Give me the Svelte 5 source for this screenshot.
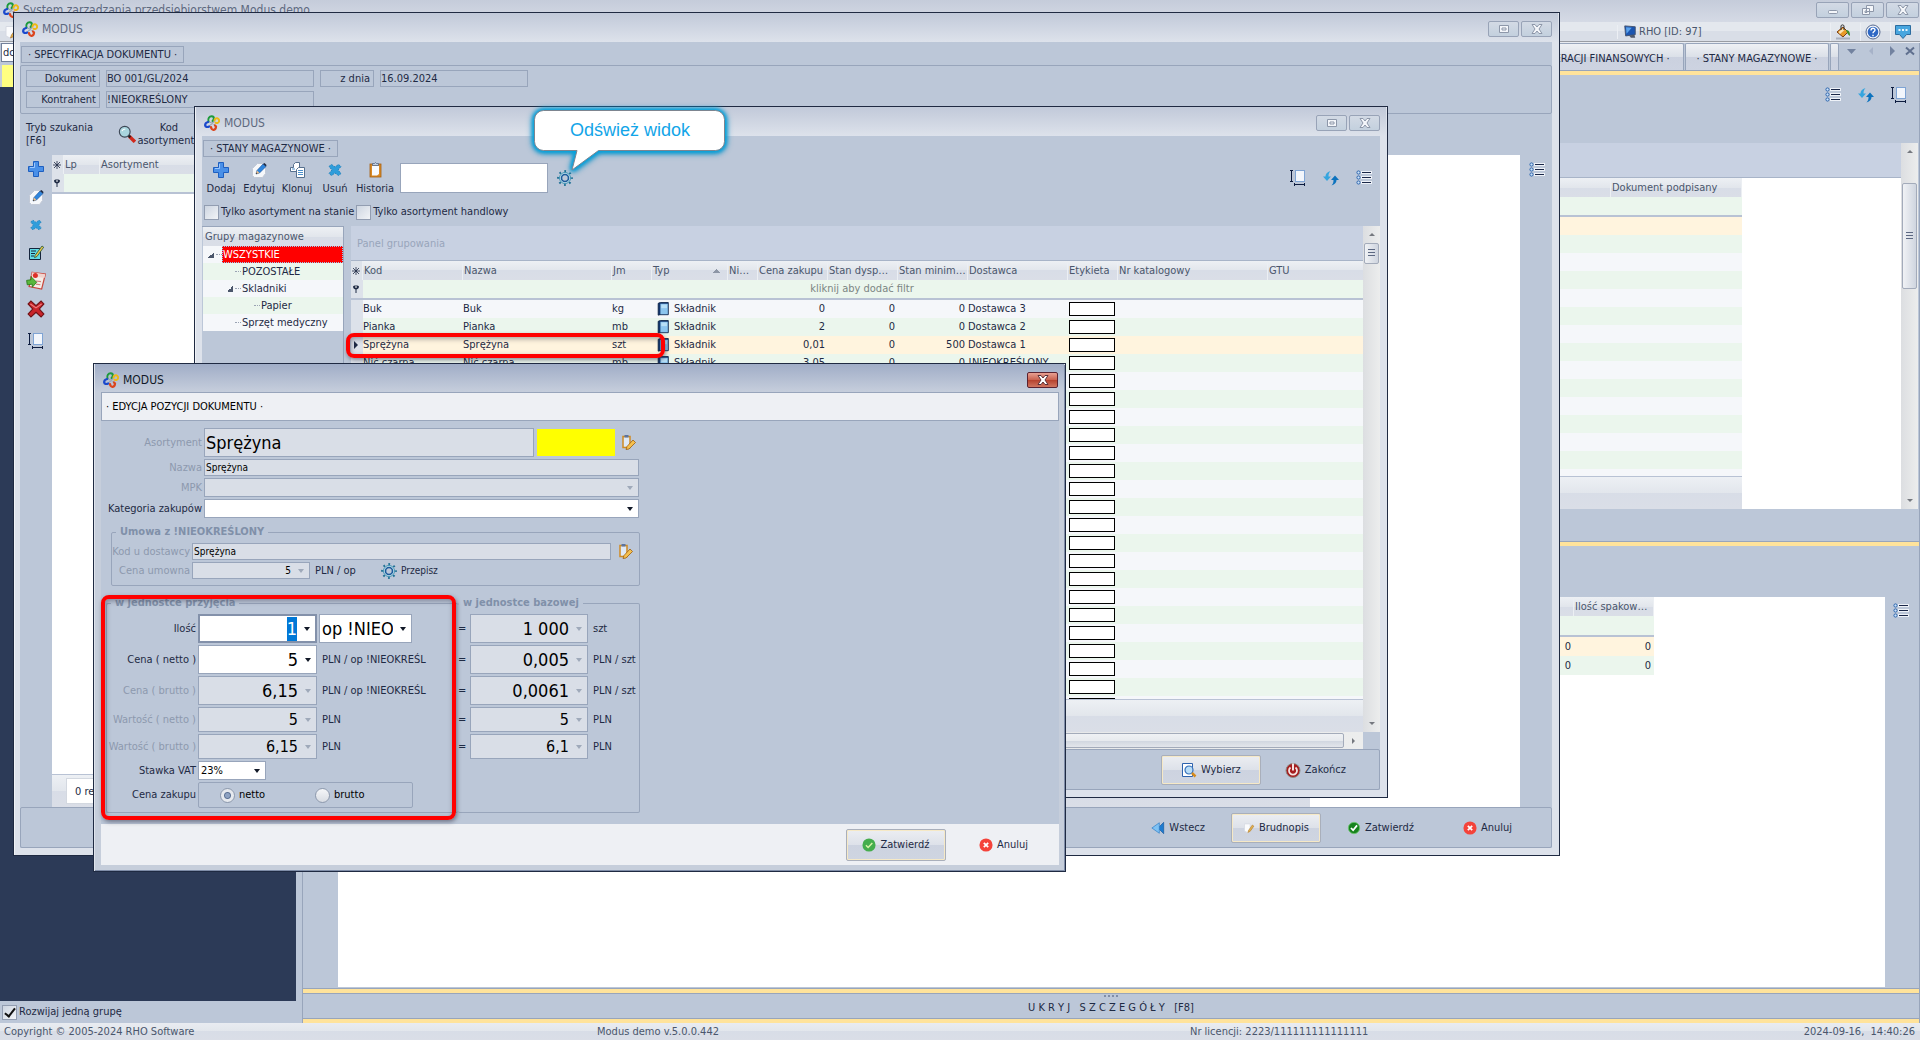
<script lang="ts">
  type Column = { label: string; width: number; sorted?: boolean };

  const columns: Column[] = [
    { label: "Kod", width: 100 },
    { label: "Nazwa", width: 149 },
    { label: "Jm", width: 40 },
    { label: "Typ", width: 76, sorted: true },
    { label: "Ni…", width: 30 },
    { label: "Cena zakupu", width: 70 },
    { label: "Stan dysp…", width: 70 },
    { label: "Stan minim…", width: 70 },
    { label: "Dostawca", width: 100 },
    { label: "Etykieta", width: 50 },
    { label: "Nr katalogowy", width: 150 },
    { label: "GTU", width: 96 },
  ];

  const items = [
    { code: "Buk", unit: "kg", price: "0", available: "0", minimum: "0", supplier: "Dostawca 3" },
    { code: "Pianka", unit: "mb", price: "2", available: "0", minimum: "0", supplier: "Dostawca 2" },
    { code: "Sprężyna", unit: "szt", price: "0,01", available: "0", minimum: "500", supplier: "Dostawca 1" },
    { code: "Nić czarna", unit: "mb", price: "3,05", available: "0", minimum: "0", supplier: "!NIEOKREŚLONY" },
  ];
  const blankRows = Array.from({ length: 19 }, (_, i) => i);
  const signedRows = Array.from({ length: 15 }, (_, i) => i);

  const groups = [
    { label: "WSZYSTKIE", level: 0, open: true },
    { label: "POZOSTAŁE", level: 1, open: false },
    { label: "Skladniki", level: 1, open: true },
    { label: "Papier", level: 2, open: false },
    { label: "Sprzęt medyczny", level: 1, open: false },
  ];

  const stockTools = [
    { icon: "plus", label: "Dodaj" },
    { icon: "pencil", label: "Edytuj" },
    { icon: "copy", label: "Klonuj" },
    { icon: "cross", label: "Usuń" },
    { icon: "clipboard", label: "Historia" },
  ];

  const sideTools = [
    { icon: "plus", label: "Dodaj", size: 16 },
    { icon: "pencil", label: "Edytuj", size: 16 },
    { icon: "cross", label: "Usuń", size: 14 },
    { icon: "note", label: "Notatka", size: 16 },
    { icon: "import", label: "Importuj", size: 20 },
    { icon: "redcross", label: "Wyczyść", size: 18 },
    { icon: "size", label: "Dopasuj", size: 16 },
  ];

  const amounts = [
    { id: "qty", label: "Ilość", value: "1", unit: "", editable: true, size: "large" },
    { id: "net", label: "Cena ( netto )", value: "5", unit: "PLN / op !NIEOKREŚL", editable: true, size: "large" },
    { id: "gross", label: "Cena ( brutto )", value: "6,15", unit: "PLN / op !NIEOKREŚL", editable: false, size: "large" },
    { id: "net-total", label: "Wartość ( netto )", value: "5", unit: "PLN", editable: false, size: "medium" },
    { id: "gross-total", label: "Wartość ( brutto )", value: "6,15", unit: "PLN", editable: false, size: "medium" },
  ];

  const baseAmounts = [
    { value: "1 000", unit: "szt", size: "large" },
    { value: "0,005", unit: "PLN / szt", size: "large" },
    { value: "0,0061", unit: "PLN / szt", size: "large" },
    { value: "5", unit: "PLN", size: "medium" },
    { value: "6,1", unit: "PLN", size: "medium" },
  ];

  let priceMode = $state("netto");
  let expandOne = $state(true);
  let onlyInStock = $state(false);
  let onlyTrade = $state(false);
  let selectedGroup = $state("WSZYSTKIE");

  function selectOnMount(node: HTMLInputElement, active: boolean) {
    if (active) {
      node.focus();
      node.select();
    }
  }
</script>

{#snippet icon(name: string, size = 16)}
  <svg class="icon" width={size} height={size} viewBox="0 0 16 16" aria-hidden="true">
    {#if name === "logo"}
      <g fill="none" stroke-linecap="round">
        <path d="M5.500 7l5 2.500M10 6.500L6.500 10" stroke="#9aa3b5" stroke-width="1.200" />
        <path d="M4.500 6.500C3.500 3.500 5.500 1.200 7.500 1.200S10.500 2.500 9.500 4.500L8.500 6" stroke="#1c9a3c" stroke-width="2" />
        <path d="M10.500 5.500c.3-1.700 1.500-2.500 2.700-2.200 1.600.4 2.400 2 1.600 3.600-.6 1.200-2 1.600-3.300.8" stroke="#edb916" stroke-width="2" />
        <path d="M4 7C2.300 7.500 1 9 1.200 10.500c.2 1.300 2 2 4 1" stroke="#1b49cc" stroke-width="2.200" />
        <path d="M7 12c.2 1.700 1.200 3 2.700 2.800 1.500-.2 2.300-1.500 2.300-3.300l-1-1" stroke="#dc451d" stroke-width="2.200" />
      </g>
    {:else if name === "plus"}
      <path d="M5.500.5h5v5h5v5h-5v5h-5v-5h-5v-5h5z" fill="#4a90e8" stroke="#1e5fc0" />
      <path d="M6.500 2v4.500H2" fill="none" stroke="#9cc8ff" />
    {:else if name === "pencil"}
      <path d="M1.500 6.500l5-5h5l3 3v7l-3 4h-8l-2-2z" fill="#f6f8fb" stroke="#c2c9d6" />
      <path d="M5 12l1-3.500 6-6.500 3 2.500-6.500 6.500z" fill="#2f86dd" stroke="#1e4f93" stroke-width=".6" />
      <path d="M5 12l1-3.500 2.500 2.500z" fill="#f0c08a" />
      <path d="M5 12l.4-1.500 1 1z" fill="#222" />
      <path d="M12 2l1.500-1 2 2-.5 1.500z" fill="#1d2a44" />
    {:else if name === "copy"}
      <path d="M4.500 5.500v-3l2-2h4v9h-9v-4z" fill="#fff" stroke="#56708f" />
      <path d="M7.500 7.500l2-2h6v10h-8z" fill="#fff" stroke="#56708f" />
      <path d="M9 8.500h5M9 10.500h5M9 12.500h5M3 7h3" stroke="#4c8fca" />
    {:else if name === "cross"}
      <path d="M2 4.500l2.500-2L8 5l3.500-2.500 2.500 2L11 8l3 3.500-2.500 2L8 11l-3.500 2.500-2.500-2L5 8z" fill="#2f9ddb" stroke="#2583bd" stroke-dasharray="2 1" />
    {:else if name === "clipboard"}
      <rect x="3" y="2" width="11" height="13" fill="#d98a27" stroke="#a65f11" stroke-width=".8" />
      <path d="M5 4h7v8l-2 1.500H5z" fill="#f8fbff" />
      <path d="M5.500 3.500h6V1.500h-2l-1-1-1 1h-2z" fill="#c3cfe0" stroke="#45608a" stroke-width=".7" />
    {:else if name === "note"}
      <path d="M1.500 3.500h11v11h-11z" fill="#62dbe6" stroke="#15243c" />
      <path d="M3 6h5M3 8.500h4M3 11h3" stroke="#15243c" />
      <path d="M7 10.500L14 1l1.700 1.200L9 11.500l-2.500 1.200z" fill="#e8c64a" stroke="#22543a" stroke-width=".8" />
    {:else if name === "import"}
      <path d="M5 1l10.500 1.500-3 12L2.500 12.500z" fill="#f4eee8" stroke="#c8463c" />
      <path d="M5 1l10.500 1.500-.7 3L4.300 4z" fill="#f1d3ce" />
      <circle cx="7.500" cy="3.500" r="2" fill="#dd2f28" />
      <path d="M8 8l4 .5M8 10.500l3.500.5" stroke="#d4827c" />
      <path d="M.5 7.500L4 7V4.500L8.500 9 5 13v-2.500l-4 .5z" fill="#59b83c" stroke="#2c7a1b" stroke-width=".7" />
    {:else if name === "redcross"}
      <path d="M1 3.500L3.500 1 8 5l4.500-4L15 3.500 11 8l4 4.500-2.500 2.500L8 11l-4.500 4L1 12.500 5 8z" fill="#c9252b" stroke="#6f1216" />
      <path d="M3 3.500L8 7l5-3.500" fill="none" stroke="#ef7d7d" />
    {:else if name === "size"}
      <rect x="5.500" y=".5" width="9" height="11" fill="#f2f6fc" stroke="#7fa4d4" />
      <path d="M1.500 1v10M0 .5h3M0 11.500h3M5 14.500h10M4.500 13v3M14.500 13v3" stroke="#0d1c3f" fill="none" />
    {:else if name === "refresh"}
      <path d="M7.500 1C4 2 2.500 4 2.500 6.500H0L4 11l4-4.500H5.500C5.500 4 6 2.500 7.500 1z" fill="#35a5df" />
      <path d="M8.500 15.500c3.500-1 5-3 5-5.500H16l-4-4.500L8 10h2.500c0 2.500-.5 4-2 5.500z" fill="#0d73be" />
    {:else if name === "list"}
      <path d="M5 2.500h11M5 7.500h11M5 12.500h11" stroke="#eef2f8" stroke-width="3" />
      <path d="M6 2.500h9M6 7.500h9M6 12.500h9" stroke="#1a2748" />
      <g fill="#cde3fa" stroke="#2d65ad">
        <circle cx="2.500" cy="2.500" r="1.600" />
        <circle cx="2.500" cy="7.500" r="1.600" />
        <circle cx="2.500" cy="12.500" r="1.600" />
      </g>
    {:else if name === "gear"}
      <circle cx="8" cy="8" r="6.900" fill="none" stroke="#1f6f94" stroke-width="2" stroke-dasharray="1.800 3.619" stroke-dashoffset=".9" />
      <circle cx="8" cy="8" r="5.500" fill="#cfe6f0" stroke="#3f93b3" />
      <circle cx="8" cy="8" r="3.500" fill="#bcc7d8" stroke="#1b5b9c" stroke-width="1.600" />
    {:else if name === "search"}
      <path d="M10 10l5 5" stroke="#d0281c" stroke-width="3" />
      <path d="M9 9l2 2" stroke="#222" stroke-width="2" />
      <circle cx="6" cy="6" r="4.800" fill="#a9d5de" stroke="#3d4856" />
      <path d="M3.500 5.500c.5-1.500 1.500-2 3-2" stroke="#fff" fill="none" />
    {:else if name === "lookup"}
      <path d="M1.500 1.500h10v13h-10z" fill="#fff" stroke="#2e63ae" />
      <circle cx="8" cy="8" r="4" fill="#b9ddf7" stroke="#3570ba" stroke-width="1.200" />
      <path d="M11 11l3.500 3.500" stroke="#d58a1c" stroke-width="2.500" />
    {:else if name === "power"}
      <circle cx="8" cy="8.500" r="7" fill="#a51d1f" stroke="#8f8984" />
      <path d="M5.500 5.500a4 4 0 1 0 5 0" fill="none" stroke="#f5e5e3" stroke-width="1.800" />
      <path d="M8 1.500v7" stroke="#f5e5e3" stroke-width="2" />
    {:else if name === "back"}
      <path d="M8 8l6.500-6.500v13z" fill="#1d7bd0" stroke="#125397" stroke-width=".7" />
      <path d="M1 8l8.500-6v12z" fill="#7fc2f3" stroke="#2f80c8" stroke-width=".8" />
    {:else if name === "draft"}
      <path d="M2 2.500h7.500v10L7 14.500 2 12z" fill="#fafbfd" stroke="#d5d9e2" />
      <path d="M6.500 14l1-3 5-7 2 1.500-5 7z" fill="#e3b04c" stroke="#a7742a" stroke-width=".7" />
    {:else if name === "ok"}
      <circle cx="8" cy="8" r="6.500" fill="#17831d" stroke="#6ac46d" />
      <path d="M4.500 8l2.500 2.500L11.500 5" fill="none" stroke="#fff" stroke-width="2" />
    {:else if name === "check"}
      <circle cx="8" cy="8" r="7.500" fill="#45ad4d" />
      <path d="M4.500 8.300l2.500 2.500 4.800-5" fill="none" stroke="#d9f6a8" stroke-width="1.700" />
    {:else if name === "cancel"}
      <circle cx="8" cy="8" r="7.500" fill="#f4433a" />
      <path d="M5.500 5.500l5 5M10.500 5.500l-5 5" stroke="#fff" stroke-width="2" />
    {:else if name === "choose"}
      <path d="M3 1.500h7v11H3z" fill="#dfe9f6" stroke="#cf8b23" stroke-width="1.500" />
      <path d="M4.500 0h4v2.500h-4z" fill="#5c74a0" />
      <path d="M6 14.500l1-3 6-6.500 2.500 2.500-6.500 6.500z" fill="#f5c04e" stroke="#9c5e10" stroke-width=".8" />
    {:else if name === "book"}
      <path d="M2.500 1.500L5 .5h9v14H4.500l-2 .5z" fill="#11356e" stroke="#0b2247" />
      <path d="M5 2h8.500v12H5z" fill="#8cc5ee" />
      <path d="M6 3h6.500v4H6z" fill="#b8dff6" />
    {:else if name === "monitor"}
      <path d="M2 1l12 1v9L3 12.500z" fill="#1b55b0" stroke="#41506b" />
      <path d="M3.500 2.500L10 3l-6 7z" fill="#5ba3ec" />
      <path d="M7 12l6-1 1 3.500H9z" fill="#4f596b" />
    {:else if name === "bucket"}
      <path d="M1 14.500h14" stroke="#a9b0bd" stroke-width="2" />
      <path d="M2 8l6-5 5 5-5 5z" fill="#e89b28" stroke="#7a3d12" />
      <path d="M3.500 8L8 4.500l1.500 1.500L5 10z" fill="#fbe3b4" />
      <path d="M6 6V2c0-1.500 3-1.500 3 0v4" fill="none" stroke="#333" />
      <path d="M11 6c3 0 4 2 4 6-2-1-3-3-4-6z" fill="#3f8d2c" />
    {:else if name === "help"}
      <circle cx="8" cy="8" r="7" fill="#f0f4fb" stroke="#56698f" />
      <circle cx="8" cy="8" r="5.300" fill="#2d67c4" />
      <path d="M6 6.500c0-3 4-2.700 4-.5 0 1.500-2 1.500-2 3.200M8 10.700v1.500" fill="none" stroke="#fff" stroke-width="1.400" />
    {:else if name === "chat"}
      <path d="M.5 1.500h15v9h-4L8 14.500l-3.500-4h-4z" fill="#48a6df" stroke="#2c6c9f" />
      <path d="M3.500 6h2M7 6h2M10.500 6h2" stroke="#e8f5fd" stroke-width="2" />
    {/if}
  </svg>
{/snippet}

{#snippet titleButton(kind: string)}
  <button class={["title-button", kind]} type="button" aria-label={kind}>
    <svg width="14" height="12" viewBox="0 0 14 12" aria-hidden="true">
      {#if kind === "minimize"}
        <rect x="2.500" y="6.500" width="9" height="3" rx="1" />
      {:else if kind === "restore"}
        <path d="M5.500 1.500h7v6h-7zM1.500 4.500h7v6h-7zM4 7h2v1.500H4z" />
      {:else if kind === "maximize"}
        <path d="M2.500 2.500h9v7h-9zM5 5h4v2H5z" />
      {:else}
        <path d="M2 1.500h3l2 2.500 2-2.500h3L9 6l3 4.500H9L7 8l-2 2.500H2L5 6z" />
      {/if}
    </svg>
  </button>
{/snippet}

{#snippet rowMark(kind: string)}
  <svg class="row-mark" width="8" height="8" viewBox="0 0 8 8" aria-hidden="true">
    {#if kind === "star"}
      <path d="M4 0v8M0 4h8M1 1l6 6M7 1L1 7" stroke="#1e2a44" stroke-width=".8" />
    {:else if kind === "filter"}
      <path d="M1 1.500C1 0 7 0 7 1.500S6 4 4.500 4.500V8h-1V4.500C2 4 1 3 1 1.500z" fill="#1e2a44" />
      <path d="M3 2h2" stroke="#fff" />
    {:else}
      <path d="M2 0l4 4-4 4z" fill="#1e2a44" />
    {/if}
  </svg>
{/snippet}

<div class="app">
  <header class="app-title">
    {@render icon("logo")}
    <span>System zarządzania przedsiębiorstwem Modus demo</span>
    <div class="title-buttons">
      {@render titleButton("minimize")}
      {@render titleButton("restore")}
      {@render titleButton("close")}
    </div>
  </header>

  <nav class="menu-bar" aria-label="Menu główne">
    <button class="menu-edit" type="button" aria-label="Edycja">{@render icon("draft")}</button>
    <span class="menu-user">{@render icon("monitor", 14)} RHO [ID: 97]</span>
    <button type="button" aria-label="Kolory">{@render icon("bucket")}</button>
    <button type="button" aria-label="Pomoc">{@render icon("help")}</button>
    <button type="button" aria-label="Wiadomości">{@render icon("chat")}</button>
  </nav>

  <div class="workspace">
    <aside class="sidebar">
      <input class="sidebar-search" value="dc" aria-label="Szukaj w menu" />
      <div class="sidebar-current"></div>
      <div class="sidebar-tree"></div>
      <label class="check sidebar-option">
        <input type="checkbox" bind:checked={expandOne} />
        Rozwijaj jedną grupę
      </label>
    </aside>

    <main class="main">
      <div class="tabs">
        <button class="tab" type="button">· OPERACJI FINANSOWYCH ·</button>
        <button class="tab" type="button">· STANY MAGAZYNOWE ·</button>
        <span class="tab cut"></span>
        <div class="tab-nav">
          <svg width="70" height="12" viewBox="0 0 70 12" aria-hidden="true">
            <path d="M2 4h9l-4.500 5z" fill="#72829f" />
            <path d="M28 2v8l-4-4z" fill="#a6b2c8" />
            <path d="M45 1v10l5-5z" fill="#72829f" />
            <path d="M61 2.500l8 7M69 2.500l-8 7" stroke="#5f6f8e" stroke-width="2" />
          </svg>
        </div>
      </div>
      <div class="accent"></div>

      <div class="main-tools">
        <button class="plain" type="button" aria-label="Lista">{@render icon("list")}</button>
        <button class="plain" type="button" aria-label="Odśwież">{@render icon("refresh")}</button>
        <button class="plain" type="button" aria-label="Dopasuj">{@render icon("size")}</button>
      </div>

      <section class="signed">
        <div class="signed-grid">
          <div class="group-panel"></div>
          <div class="grid-body">
            <table>
              <colgroup><col /><col class="col-signed" /></colgroup>
              <thead>
                <tr><th></th><th>Dokument podpisany</th></tr>
              </thead>
              <tbody>
                <tr class="filter"><td colspan="2"></td></tr>
                {#each signedRows as row}
                  <tr class:current={row === 0}><td></td><td></td></tr>
                {/each}
              </tbody>
            </table>
          </div>
          <div class="grid-foot"></div>
        </div>
        <div class="scrollbar">
          <i class="arrow up"></i>
          <i class="gap"></i>
          <i class="thumb tall"></i>
          <i class="fill"></i>
          <i class="arrow down"></i>
        </div>
      </section>

      <div class="between"></div>
      <div class="accent"></div>
      <div class="details-head"></div>

      <section class="details">
        <div class="details-grid">
          <table>
            <colgroup><col /><col class="col-packed" /></colgroup>
            <thead>
              <tr><th></th><th>Ilość spakow…</th></tr>
            </thead>
            <tbody>
              <tr class="filter"><td colspan="2"></td></tr>
              <tr class="current"><td class="right">0</td><td class="right">0</td></tr>
              <tr class="green"><td class="right">0</td><td class="right">0</td></tr>
            </tbody>
          </table>
        </div>
        <button class="plain" type="button" aria-label="Lista">{@render icon("list")}</button>
      </section>

      <div class="accent"></div>
      <button class="details-toggle" type="button">
        <span class="grip"></span>
        <span>U K R Y J &nbsp; S Z C Z E G Ó Ł Y &nbsp; [F8]</span>
      </button>
      <div class="accent"></div>
    </main>
  </div>

  <footer class="status">
    <span>Copyright © 2005-2024 RHO Software</span>
    <span>Modus demo v.5.0.0.442</span>
    <span>Nr licencji: 2223/111111111111111</span>
    <span>2024-09-16, &nbsp;14:40:26</span>
  </footer>

  <!-- document specification -->
  <section class="window document" aria-label="Specyfikacja dokumentu">
    <header class="window-title">
      {@render icon("logo")}
      <span>MODUS</span>
      <div class="title-buttons">
        {@render titleButton("maximize")}
        {@render titleButton("close")}
      </div>
    </header>
    <div class="window-body">
      <div class="caption-row"><h2 class="caption">· SPECYFIKACJA DOKUMENTU ·</h2></div>
      <div class="doc-fields">
        <span class="cell name">Dokument</span><span class="cell">BO 001/GL/2024</span>
        <span class="cell name">z dnia</span><span class="cell">16.09.2024</span>
        <span class="cell name second">Kontrahent</span><span class="cell">!NIEOKREŚLONY</span>
      </div>
      <div class="doc-search">
        <span>Tryb szukania<br />[F6]</span>
        {@render icon("search", 18)}
        <span class="mode">Kod<br />asortymentu</span>
      </div>
      <div class="doc-area">
        <div class="side-tools">
          {#each sideTools as tool}
            <button class="plain" type="button" aria-label={tool.label}>{@render icon(tool.icon, tool.size)}</button>
          {/each}
        </div>
        <div class="doc-grid">
          <table>
            <colgroup><col class="col-mark" /><col class="col-lp" /><col /></colgroup>
            <thead>
              <tr><th class="mark">{@render rowMark("star")}</th><th>Lp</th><th>Asortyment</th></tr>
            </thead>
            <tbody>
              <tr class="filter"><td class="mark">{@render rowMark("filter")}</td><td colspan="2"></td></tr>
            </tbody>
          </table>
          <div class="doc-grid-foot"><span>0 rekordów</span></div>
        </div>
        <button class="plain doc-list" type="button" aria-label="Lista">{@render icon("list")}</button>
      </div>
      <div class="actions doc-actions">
        <button class="action" type="button">{@render icon("back", 14)} Wstecz</button>
        <button class="action raised" type="button">{@render icon("draft", 12)} Brudnopis</button>
        <button class="action" type="button">{@render icon("ok", 14)} Zatwierdź</button>
        <button class="action" type="button">{@render icon("cancel", 14)} Anuluj</button>
      </div>
    </div>
  </section>

  <!-- stock levels -->
  <section class="window stock" aria-label="Stany magazynowe">
    <header class="window-title">
      {@render icon("logo")}
      <span>MODUS</span>
      <div class="title-buttons">
        {@render titleButton("maximize")}
        {@render titleButton("close")}
      </div>
    </header>
    <div class="window-body">
      <div class="caption-row"><h2 class="caption">· STANY MAGAZYNOWE ·</h2></div>
      <div class="stock-tools">
        {#each stockTools as tool}
          <button class="tool" type="button">{@render icon(tool.icon)}<span>{tool.label}</span></button>
        {/each}
        <input class="stock-search" aria-label="Szukaj asortymentu" />
        <button class="plain" type="button" aria-label="Odśwież widok">{@render icon("gear")}</button>
        <div class="stock-view">
          <button class="plain" type="button" aria-label="Dopasuj">{@render icon("size")}</button>
          <button class="plain" type="button" aria-label="Odśwież">{@render icon("refresh")}</button>
          <button class="plain" type="button" aria-label="Lista">{@render icon("list")}</button>
        </div>
      </div>
      <div class="stock-filters">
        <label class="check"><input type="checkbox" bind:checked={onlyInStock} />Tylko asortyment na stanie</label>
        <label class="check"><input type="checkbox" bind:checked={onlyTrade} />Tylko asortyment handlowy</label>
      </div>
      <div class="stock-area">
        <div class="groups">
          <div class="groups-head">Grupy magazynowe</div>
          {#each groups as group}
            <button
              class={["group", `level-${group.level}`]}
              class:selected={selectedGroup === group.label}
              type="button"
              onclick={() => (selectedGroup = group.label)}
            >
              <i class="node" class:open={group.open}></i><i class="branch"></i><span>{group.label}</span>
            </button>
          {/each}
        </div>
        <div class="stock-right">
          <div class="stock-grid">
            <div class="group-panel">Panel grupowania</div>
            <div class="grid-body">
              <table>
                <colgroup>
                  <col class="col-mark" />
                  {#each columns as column}
                    <col style="width: {column.width}px" />
                  {/each}
                </colgroup>
                <thead>
                  <tr>
                    <th class="mark">{@render rowMark("star")}</th>
                    {#each columns as column}
                      <th class:sorted={column.sorted}>{column.label}</th>
                    {/each}
                  </tr>
                </thead>
                <tbody>
                  <tr class="filter">
                    <td class="mark">{@render rowMark("filter")}</td>
                    <td class="hint" colspan={columns.length}>kliknij aby dodać filtr</td>
                  </tr>
                  {#each items as item, index}
                    <tr class:current={index === 2}>
                      <td class="mark">{#if index === 2}{@render rowMark("arrow")}{/if}</td>
                      <td>{item.code}</td>
                      <td>{item.code}</td>
                      <td>{item.unit}</td>
                      <td><span class="kind">{@render icon("book", 14)} Składnik</span></td>
                      <td></td>
                      <td class="right">{item.price}</td>
                      <td class="right">{item.available}</td>
                      <td class="right">{item.minimum}</td>
                      <td>{item.supplier}</td>
                      <td><i class="tag"></i></td>
                      <td></td>
                      <td></td>
                    </tr>
                  {/each}
                  {#each blankRows as row (row)}
                    <tr>
                      <td class="mark"></td>
                      <td colspan="9"></td>
                      <td><i class="tag"></i></td>
                      <td></td>
                      <td></td>
                    </tr>
                  {/each}
                </tbody>
              </table>
            </div>
            <div class="grid-foot"></div>
          </div>
          <div class="scrollbar">
            <i class="arrow up"></i>
            <i class="thumb"></i>
            <i class="fill"></i>
            <i class="arrow down"></i>
          </div>
          <div class="scrollbar horizontal">
            <i class="thumb"></i>
            <i class="arrow next"></i>
          </div>
        </div>
      </div>
      <div class="actions stock-actions">
        <button class="action raised" type="button">{@render icon("lookup")} Wybierz</button>
        <button class="action" type="button">{@render icon("power")} Zakończ</button>
      </div>
    </div>

    <div class="marker marker-row"></div>
    <div class="callout">
      <svg width="210" height="84" viewBox="0 0 210 84" aria-hidden="true">
        <path d="M18.500 10.500h172a9 9 0 0 1 9 9v22a9 9 0 0 1-9 9h-117L47 70l5-19.500H18.500a9 9 0 0 1-9-9v-22a9 9 0 0 1 9-9z" fill="#fff" stroke="#7d8590" />
      </svg>
      <span>Odśwież widok</span>
    </div>
  </section>

  <!-- line item editor -->
  <section class="window editor" aria-label="Edycja pozycji dokumentu">
    <header class="window-title">
      {@render icon("logo")}
      <span>MODUS</span>
      <div class="title-buttons">{@render titleButton("close")}</div>
    </header>
    <div class="window-body">
      <h2 class="editor-caption">· EDYCJA POZYCJI DOKUMENTU ·</h2>

      <form class="form" onsubmit={(event) => event.preventDefault()}>
        <div class="row tall">
          <label class="dim" for="item">Asortyment</label>
          <input id="item" class="box item-code" value="Sprężyna" readonly />
          <span class="swatch"></span>
          <button class="plain" type="button" aria-label="Wybierz asortyment">{@render icon("choose")}</button>
        </div>
        <div class="row">
          <label class="dim" for="name">Nazwa</label>
          <input id="name" class="box small" value="Sprężyna" readonly />
        </div>
        <div class="row drop">
          <label class="dim" for="mpk">MPK</label>
          <span class="select disabled"><select id="mpk" disabled><option></option></select></span>
        </div>
        <div class="row drop">
          <label for="category">Kategoria zakupów</label>
          <span class="select"><select id="category"><option></option></select></span>
        </div>

        <fieldset class="contract">
          <legend>Umowa z !NIEOKREŚLONY</legend>
          <div class="row">
            <label class="dim" for="supplier-code">Kod u dostawcy</label>
            <input id="supplier-code" class="box small" value="Sprężyna" readonly />
            <button class="plain pick" type="button" aria-label="Wybierz kod">{@render icon("choose")}</button>
          </div>
          <div class="row">
            <label class="dim" for="contract-price">Cena umowna</label>
            <span class="calc disabled contract-price">
              <input id="contract-price" class="small" value="5" readonly />
              <i class="caret"></i>
            </span>
            <span class="unit">PLN / op</span>
            <button class="plain rewrite" type="button">{@render icon("gear")} Przepisz</button>
          </div>
        </fieldset>

        <div class="units">
          <fieldset class="received">
            <legend>w jednostce przyjęcia</legend>
            {#each amounts as amount, index}
              <div class={["row", amount.size]}>
                <label class:dim={!amount.editable} for={amount.id}>{amount.label}</label>
                <span class="calc" class:disabled={!amount.editable} class:focused={index === 0}>
                  <input id={amount.id} value={amount.value} readonly={!amount.editable} use:selectOnMount={index === 0} />
                  <i class="caret"></i>
                </span>
                {#if index === 0}
                  <span class="select unit-select">
                    <select aria-label="Jednostka"><option>op !NIEOKREŚLONY</option></select>
                  </span>
                {:else}
                  <span class="unit">{amount.unit}</span>
                {/if}
              </div>
            {/each}
            <div class="row drop">
              <label for="vat">Stawka VAT</label>
              <span class="select vat"><select id="vat"><option>23%</option></select></span>
            </div>
            <div class="row radios">
              <span class="label" id="price-mode">Cena zakupu</span>
              <div class="radio-box" role="radiogroup" aria-labelledby="price-mode">
                <label><input type="radio" value="netto" bind:group={priceMode} />netto</label>
                <label><input type="radio" value="brutto" bind:group={priceMode} />brutto</label>
              </div>
            </div>
          </fieldset>
          <fieldset class="base">
            <legend>w jednostce bazowej</legend>
            {#each baseAmounts as amount, index}
              <div class={["row", amount.size]}>
                <span class="equals">=</span>
                <span class="calc disabled">
                  <input value={amount.value} aria-label="{amounts[index].label} w jednostce bazowej" readonly />
                  <i class="caret"></i>
                </span>
                <span class="unit">{amount.unit}</span>
              </div>
            {/each}
          </fieldset>
        </div>
      </form>

      <div class="editor-actions">
        <button class="action raised" type="button">{@render icon("check", 14)} Zatwierdź</button>
        <button class="action" type="button">{@render icon("cancel", 14)} Anuluj</button>
      </div>
    </div>
    <div class="marker marker-form"></div>
  </section>
</div>

<style>
  :global(body) {
    margin: 0;
    overflow: hidden;
  }

  .app {
    --blue: #bcc7d8;
    --line: #98a5bb;
    --ink: #1e2a44;
    --soft: #4a566c;
    --head: linear-gradient(#edf0f4, #e2e6ec 50%, #d8dde7 50%, #dadee7);
    position: relative;
    display: flex;
    flex-direction: column;
    height: 100vh;
    background: var(--blue);
    color: var(--ink);
    font-family: "DejaVu Sans Condensed", Roboto, sans-serif;
    font-size: 11px;
    line-height: 14px;
  }

  .app :global(*) {
    box-sizing: border-box;
  }

  button,
  input,
  select {
    margin: 0;
    padding: 0;
    border: 0;
    background: transparent;
    color: inherit;
    font: inherit;
  }

  input:focus {
    outline: none;
  }

  .icon {
    flex: none;
    display: block;
  }

  .plain {
    display: flex;
    align-items: center;
  }

  /* application frame */
  .app-title,
  .window-title {
    display: flex;
    align-items: center;
    gap: 4px;
    color: #5e697f;
    font-size: 12px;
    background: linear-gradient(#c1c9d9, #dde2eb);
    white-space: nowrap;
  }

  .app-title {
    flex: none;
    height: 22px;
    padding: 0 1px 2px 3px;
    background: linear-gradient(#c5ccda, #d5dae5);
  }

  .title-buttons {
    display: flex;
    gap: 2px;
    margin-left: auto;
  }

  .title-button {
    display: flex;
    align-items: center;
    justify-content: center;
    width: 31px;
    height: 16px;
    border: 1px solid #98a3b7;
    border-radius: 2px;
    background: linear-gradient(#d3dae5, #c3d0de);
  }

  .app-title .title-button {
    width: 33px;
  }

  .title-button svg {
    fill: #f4f6fa;
    stroke: #8d97a9;
  }

  .menu-bar {
    flex: none;
    display: flex;
    align-items: center;
    height: 20px;
    border-bottom: 1px solid #999ca3;
    background: linear-gradient(#e4e8ee, #e4e8ee 50%, #d9dee7 50%);
  }

  .menu-bar button {
    display: flex;
    align-items: center;
    width: 30px;
    height: 18px;
    padding-left: 4px;
    border-left: 1px solid #eceff4;
  }

  .menu-bar .menu-edit {
    margin-right: auto;
    border: 0;
  }

  .menu-user {
    display: flex;
    align-items: center;
    gap: 2px;
    width: 213px;
    padding-left: 5px;
    border-left: 1px solid #eceff4;
    color: var(--soft);
  }

  .workspace {
    flex: 1;
    min-height: 0;
    display: flex;
    gap: 6px;
    border-top: 1px solid #e8ebf1;
  }

  .sidebar {
    width: 296px;
    display: flex;
    flex-direction: column;
  }

  .sidebar-search {
    height: 19px;
    margin: 0 0 3px 1px;
    padding: 0 1px;
    border: 1px solid #73819b;
    background: #fff;
  }

  .sidebar-current {
    height: 22px;
    border-left: 2px solid #c5ced9;
    background: #ffff80;
  }

  .sidebar-tree {
    flex: 1;
    background: #2c3a57;
  }

  .check {
    display: flex;
    align-items: center;
    gap: 2px;
    white-space: nowrap;
  }

  .check input {
    appearance: none;
    display: grid;
    place-items: center;
    width: 15px;
    height: 15px;
    border: 1px solid #929db1;
    background: linear-gradient(135deg, #cdd5e1, #f2f4f7);
  }

  .check input:checked::after {
    content: "";
    width: 4px;
    height: 9px;
    margin-bottom: 3px;
    border: solid #111;
    border-width: 0 2px 2px 0;
    transform: rotate(38deg);
  }

  .sidebar-option {
    height: 22px;
    padding-left: 2px;
  }

  .main {
    flex: 1;
    min-width: 0;
    display: flex;
    flex-direction: column;
    border: solid var(--line);
    border-width: 0 1px 0 1px;
  }

  .tabs {
    display: flex;
    justify-content: flex-end;
    gap: 1px;
    height: 27px;
    padding-right: 1px;
  }

  .tab {
    width: 144px;
    padding-top: 4px;
    border: 1px solid var(--line);
    border-bottom: 0;
    border-radius: 2px 2px 0 0;
    background: linear-gradient(#eef0f4, #dbe0e8 50%, #cbd1df 50%, #cdd3e1);
    white-space: nowrap;
  }

  .tab:first-child {
    width: 164px;
  }

  .tab.cut {
    width: 9px;
  }

  .tab-nav {
    padding: 2px 0 0 5px;
    width: 78px;
  }

  .accent {
    flex: none;
    height: 5px;
    border-top: 1px solid var(--line);
    background: #ffe39b;
  }

  .main-tools {
    display: flex;
    justify-content: flex-end;
    align-items: flex-start;
    gap: 17px;
    height: 68px;
    padding: 12px 12px 0 0;
  }

  /* grids */
  table {
    width: 100%;
    table-layout: fixed;
    border-collapse: separate;
    border-spacing: 0;
    background: #fff;
  }

  th {
    height: 19px;
    padding: 1px 1px 0;
    border-right: 1px solid #eceff3;
    background: var(--head);
    color: var(--soft);
    font-weight: normal;
    text-align: left;
    white-space: nowrap;
  }

  td {
    height: 18px;
    padding: 0 3px 0 0;
    background: #ebf6ed;
    white-space: nowrap;
  }

  tbody tr:nth-child(even) td {
    background: #f5f7fa;
  }

  tbody tr.current td {
    background: #fff4de;
  }

  tbody tr.green td {
    background: #ebf6ed;
  }

  tbody tr.filter td {
    height: 20px;
    border-bottom: 2px solid #b8c2d4;
    background: #ebf6ed;
  }

  table .mark,
  tbody tr td.mark,
  tbody tr.filter td.mark {
    padding: 0 1px;
    background: #dde2ea;
  }

  .row-mark {
    display: block;
  }

  .col-mark {
    width: 12px;
  }

  .hint {
    color: #7b8583;
    text-align: center;
  }

  .right {
    text-align: right;
  }

  .group-panel {
    flex: none;
    height: 35px;
    padding: 11px 6px 0;
    border-bottom: 1px solid #a8b4c8;
    background: #c8d1e2;
    color: #98a5bb;
  }

  .grid-body {
    flex: 1;
    min-height: 0;
    overflow: hidden;
  }

  .grid-foot {
    flex: none;
    height: 33px;
    border-top: 1px solid #b8c2d4;
    background: var(--head);
  }

  .scrollbar {
    display: flex;
    flex-direction: column;
    width: 17px;
    padding: 0 1px;
    background: linear-gradient(90deg, #dcdee1, #eceded);
  }

  .scrollbar .fill {
    flex: 1;
  }

  .scrollbar .gap {
    height: 23px;
  }

  .scrollbar .thumb {
    height: 21px;
    border: 1px solid #a3abba;
    border-radius: 2px;
  }

  .scrollbar:not(.horizontal) .thumb {
    background:
      repeating-linear-gradient(#5c6882 0 1px, transparent 1px 3px) center / 7px 9px no-repeat,
      linear-gradient(90deg, #f0f2f5, #cfd5df);
  }

  .scrollbar .thumb.tall {
    height: 106px;
  }

  .arrow {
    display: grid;
    place-items: center;
    height: 17px;
  }

  .arrow::after {
    content: "";
    border: 3px solid transparent;
    border-top: 0;
    border-bottom-color: #75787f;
  }

  .arrow.down::after {
    border: 3px solid transparent;
    border-bottom: 0;
    border-top-color: #75787f;
  }

  .arrow.next::after {
    border: 3px solid transparent;
    border-right: 0;
    border-left-color: #75787f;
  }

  .signed {
    display: flex;
    height: 366px;
    padding-right: 1px;
  }

  .signed-grid {
    flex: 1;
    display: flex;
    flex-direction: column;
    background: #fff;
  }

  .signed-grid .grid-body,
  .signed-grid .grid-foot {
    margin-right: 159px;
  }

  .col-signed {
    width: 131px;
  }

  .between {
    height: 32px;
  }

  .details-head {
    height: 51px;
  }

  .details {
    flex: 1;
    min-height: 0;
    display: flex;
    align-items: flex-start;
    gap: 8px;
    padding: 0 10px 1px 35px;
  }

  .details-grid {
    flex: 1;
    align-self: stretch;
    background: #fff;
  }

  .details-grid table {
    width: 1316px;
  }

  .details-grid .current td,
  .details-grid .green td {
    height: 19px;
  }

  .details-grid .filter td {
    height: 21px;
  }

  .col-packed {
    width: 80px;
  }

  .details .plain {
    padding-top: 6px;
  }

  .details-toggle {
    flex: none;
    display: flex;
    flex-direction: column;
    align-items: center;
    gap: 4px;
    height: 25px;
    border-top: 1px solid var(--line);
  }

  .grip {
    width: 14px;
    height: 2px;
    margin-top: 1px;
    background: repeating-linear-gradient(90deg, #7f8ca6 0 2px, transparent 2px 4px);
  }

  .status {
    flex: none;
    display: grid;
    grid-template-columns: 593px 593px 1fr auto;
    align-items: center;
    height: 17px;
    padding: 0 5px 0 4px;
    background: linear-gradient(#e9ecf1, #e2e6ec 50%, #d8dde7 50%, #dadee7);
    color: var(--soft);
  }

  /* windows */
  .window {
    position: absolute;
    display: flex;
    flex-direction: column;
    padding: 0 7px 7px;
    border: 1px solid #1f2a42;
    background: #dde2eb;
    box-shadow: inset 1px 1px #f0f2f6;
  }

  .window-title {
    flex: none;
    height: 29px;
    margin: 0 -6px;
    padding: 3px 6px 0 8px;
  }

  .window-body {
    flex: 1;
    min-height: 0;
    display: flex;
    flex-direction: column;
    background: var(--blue);
  }

  .caption-row {
    height: 24px;
    padding: 4px 1px;
  }

  .caption {
    width: fit-content;
    height: 17px;
    margin: 0;
    padding: 0 6px;
    border: 1px solid var(--line);
    font-size: 11px;
    font-weight: normal;
    line-height: 16px;
  }

  .actions {
    flex: none;
    display: flex;
    align-items: center;
    justify-content: flex-end;
    height: 41px;
    border: 1px solid var(--line);
    border-radius: 2px;
  }

  .action {
    display: flex;
    align-items: center;
    justify-content: center;
    gap: 4px;
    height: 30px;
    white-space: nowrap;
  }

  .action.raised {
    border: 1px solid #a9afbb;
    border-radius: 2px;
    background: linear-gradient(#eceef2, #dde1e9 50%, #cdd3e0 50%, #cfd5e1);
    box-shadow: inset 0 0 0 1px #f6e9c6;
  }

  .document {
    left: 13px;
    top: 12px;
    width: 1547px;
    height: 844px;
    padding-left: 6px;
  }

  .document .caption-row {
    height: 23px;
  }

  .doc-fields {
    display: grid;
    grid-template-columns: 74px 208px 54px 148px;
    align-content: start;
    gap: 4px 6px;
    height: 49px;
    padding: 4px 5px;
    border: 1px solid var(--line);
    border-radius: 2px;
  }

  .cell {
    height: 17px;
    padding-right: 3px;
    border: 1px solid var(--line);
    line-height: 16px;
  }

  .cell.name {
    text-align: right;
  }

  .cell.second {
    grid-column: 1;
  }

  .doc-search {
    display: flex;
    align-items: flex-start;
    height: 41px;
    padding: 7px 7px 0 6px;
    line-height: 13px;
  }

  .doc-search .icon {
    margin: 4px 0 0 24px;
  }

  .doc-search span:first-child {
    width: 68px;
    white-space: nowrap;
  }

  .doc-search .mode {
    width: 66px;
    text-align: center;
  }

  .doc-area {
    flex: 1;
    min-height: 0;
    display: flex;
    align-items: flex-start;
  }

  .side-tools {
    width: 32px;
    display: flex;
    flex-direction: column;
    gap: 10px;
    padding: 5px 6px 0;
  }

  .side-tools .plain {
    justify-content: center;
    height: 18px;
  }

  .side-tools .plain:last-child {
    margin-top: 4px;
  }

  .doc-grid {
    flex: 1;
    align-self: stretch;
    display: flex;
    flex-direction: column;
    justify-content: space-between;
    background: #fff;
  }

  .doc-grid table {
    width: 1258px;
  }

  .col-lp {
    width: 36px;
  }

  .doc-grid-foot {
    width: 1258px;
    height: 33px;
    padding: 3px 14px;
    border-top: 1px solid #b8c2d4;
    background: var(--head);
  }

  .doc-grid-foot span {
    display: block;
    width: 90px;
    height: 26px;
    padding: 0 8px;
    border: 1px solid #d3d8e0;
    background: #fff;
    line-height: 25px;
  }

  .doc-list {
    padding: 7px 7px 0 9px;
  }

  .doc-actions {
    gap: 26px;
    padding-right: 39px;
  }

  .doc-actions .raised {
    width: 90px;
  }

  .doc-actions .action:last-child {
    margin-left: 23px;
  }

  .stock {
    left: 194px;
    top: 106px;
    width: 1194px;
    height: 692px;
  }

  .stock-tools {
    display: flex;
    height: 42px;
    padding: 2px 8px 0 0;
  }

  .tool {
    display: flex;
    flex-direction: column;
    align-items: center;
    gap: 4px;
    width: 38px;
  }

  .tool:nth-child(5) {
    width: 42px;
  }

  .stock-search {
    width: 148px;
    height: 30px;
    margin: 1px 9px 0 4px;
    padding: 0 4px;
    border: 1px solid var(--line);
    background: #fff;
  }

  .stock-tools .plain {
    height: 16px;
    margin-top: 8px;
  }

  .stock-view {
    display: flex;
    gap: 17px;
    margin-left: auto;
  }

  .stock-filters {
    display: flex;
    gap: 2px;
    height: 24px;
    padding: 2px 2px 6px;
  }

  .stock-area {
    flex: 1;
    min-height: 0;
    display: flex;
    gap: 7px;
  }

  .groups {
    width: 142px;
    padding-left: 1px;
    border-right: 1px solid var(--line);
    border-top: 1px solid var(--line);
  }

  .groups-head {
    height: 19px;
    padding: 3px 2px 0;
    background: var(--head);
    color: var(--soft);
  }

  .group {
    display: flex;
    align-items: center;
    width: 100%;
    height: 17px;
    background: #f5f7fa;
    text-align: left;
  }

  .group:nth-child(odd) {
    background: #ebf6ed;
  }

  .group span {
    flex: 1;
    height: 17px;
    padding-left: 1px;
    line-height: 18px;
  }

  .group.selected span {
    outline: 1px dotted #9ce;
    outline-offset: -1px;
    background: #f00;
    color: #fff;
  }

  .node {
    width: 6px;
    height: 6px;
    margin: 0 2px 0 5px;
  }

  .node.open {
    background: linear-gradient(135deg, transparent 50%, #4b566b 50%);
  }

  .branch {
    width: 6px;
    border-top: 1px dotted #9aa3b3;
  }

  .level-1 .node {
    margin-left: 24px;
  }

  .level-2 .node {
    margin-left: 43px;
  }

  .stock-right {
    flex: 1;
    min-width: 0;
    display: grid;
    grid-template: 1fr 17px / 1fr 17px;
  }

  .stock-grid {
    min-width: 0;
    min-height: 0;
    display: flex;
    flex-direction: column;
  }

  .stock-grid th.sorted {
    background:
      linear-gradient(135deg, transparent 50%, #8d96a6 50%) right 10px center / 4px 4px no-repeat,
      linear-gradient(225deg, transparent 50%, #8d96a6 50%) right 6px center / 4px 4px no-repeat,
      var(--head);
  }

  .kind {
    display: flex;
    align-items: center;
    gap: 4px;
    padding-left: 4px;
  }

  .tag {
    display: block;
    width: 46px;
    height: 14px;
    margin-left: 1px;
    border: 1px solid #000;
    background: #fff;
  }

  .scrollbar.horizontal {
    flex-direction: row;
    width: auto;
    padding: 1px 0;
  }

  .scrollbar.horizontal .thumb {
    flex: 1;
    height: 15px;
    background: linear-gradient(#eff1f4, #e7eaee 50%, #cfd5df 50%, #e3e6eb);
  }

  .scrollbar.horizontal .arrow {
    width: 19px;
    height: 15px;
  }

  .stock-actions {
    gap: 24px;
    padding-right: 33px;
  }

  .stock-actions .raised {
    width: 100px;
  }

  .marker {
    position: absolute;
    border: 4px solid #f00;
    border-radius: 8px;
    box-shadow: 1px 2px 4px rgba(40, 40, 60, 0.5), inset 1px 2px 5px rgba(40, 40, 60, 0.4);
    pointer-events: none;
  }

  .marker-row {
    left: 151px;
    top: 226px;
    width: 319px;
    height: 25px;
  }

  .callout {
    position: absolute;
    left: 330px;
    top: -7px;
    width: 210px;
    height: 84px;
    color: #12a5e8;
    font: 18px/20px "Liberation Sans", sans-serif;
    text-align: center;
  }

  .callout svg {
    display: block;
    filter: drop-shadow(0 0 2px #00a4e0) drop-shadow(0 0 2px #00a4e0) drop-shadow(0 1px 2px #1f8fbe);
  }

  .callout span {
    position: absolute;
    inset: 20px 0 auto;
  }

  .editor {
    left: 93px;
    top: 363px;
    width: 973px;
    height: 509px;
    padding: 0 6px 6px 7px;
    background: #c6cedb;
    box-shadow: inset 1px 1px #dfe4ec, inset -1px -1px #7f8da8;
  }

  .editor .window-title {
    height: 28px;
    margin: 0 -5px 0 -6px;
    background: linear-gradient(#a0adc7, #c6cedc);
    color: #111827;
  }

  .editor .title-button {
    border-color: #5b2230;
    background: linear-gradient(#e8a092, #c9604d 50%, #b5402c 50%, #d07560);
  }

  .editor .title-button svg {
    fill: #fff;
    stroke: #5b3038;
  }

  .editor-caption {
    flex: none;
    height: 29px;
    margin: 0;
    padding: 0 4px;
    border: 1px solid var(--line);
    background: #eef0f4;
    font-size: 11px;
    font-weight: normal;
    line-height: 27px;
    color: #000;
  }

  .form {
    flex: 1;
    display: flex;
    flex-direction: column;
    align-items: flex-start;
    gap: 2px;
    padding: 7px 0 0;
  }

  .row {
    display: flex;
    align-items: center;
    gap: 2px;
    width: 538px;
    height: 17px;
  }

  .row.drop {
    height: 19px;
  }

  .row.tall,
  .row.large {
    height: 29px;
  }

  .row.medium {
    height: 25px;
  }

  .row.radios {
    height: 26px;
  }

  .row > label,
  .row > .label {
    flex: none;
    width: 101px;
    text-align: right;
    white-space: nowrap;
  }

  .row > .dim {
    color: #8d99ae;
  }

  .box,
  .calc,
  .select {
    flex: 1;
    min-width: 0;
    height: 100%;
    border: 1px solid var(--line);
    background: #d9dee7;
    color: #000;
  }

  .box {
    padding: 0 1px;
  }

  .small {
    font-size: 10px;
  }

  .item-code {
    flex: none;
    width: 330px;
    font-size: 18px;
  }

  .swatch {
    width: 78px;
    height: 27px;
    margin: 0 3px 0 1px;
    background: #ff0;
  }

  .calc {
    display: flex;
    align-items: center;
    background: #fff;
  }

  .calc input {
    flex: 1;
    min-width: 0;
    text-align: right;
  }

  .calc.disabled,
  .select.disabled {
    background: #d9dee7;
  }

  .calc.focused {
    border: 2px solid #8391aa;
  }

  .caret {
    margin: 0 5px 0 7px;
  }

  .caret,
  .select::after {
    border: 3px solid transparent;
    border-top: 4px solid #111827;
    border-bottom: 0;
  }

  .disabled .caret,
  .select.disabled::after {
    border-top-color: #9fa9ba;
  }

  .select {
    position: relative;
    display: flex;
    background: #fff;
  }

  .select::after {
    content: "";
    position: absolute;
    right: 5px;
    top: calc(50% - 2px);
    pointer-events: none;
  }

  .select select {
    appearance: none;
    flex: 1;
    min-width: 0;
    padding: 0 18px 0 2px;
  }

  fieldset {
    min-width: 0;
    margin: 0;
    padding: 0;
    border: 1px solid var(--line);
    border-radius: 2px;
  }

  legend {
    margin-left: 4px;
    padding: 0 4px;
    color: #8090a9;
    font-size: 11px;
    font-weight: bold;
    line-height: 14px;
  }

  .contract {
    width: 529px;
    height: 61px;
    margin: 5px 0 0 10px;
  }

  .contract .row {
    width: 100%;
    margin-top: 4px;
    padding-right: 6px;
  }

  .contract .row + .row {
    margin-top: 2px;
  }

  .contract .row > label {
    width: 78px;
  }

  .contract .pick {
    margin-left: 4px;
  }

  .contract .contract-price {
    flex: none;
    width: 118px;
  }

  .contract .unit {
    width: 67px;
  }

  .rewrite {
    gap: 4px;
    font-size: 10px;
  }

  .units {
    display: flex;
    margin: 8px 0 0 5px;
  }

  .units fieldset {
    display: flex;
    flex-direction: column;
    gap: 2px;
    height: 217px;
    padding-top: 4px;
  }

  .received {
    width: 352px;
    border-right: 0;
  }

  .base {
    width: 182px;
    border-left: 0;
  }

  .base legend {
    margin-left: 1px;
  }

  .units .row {
    width: 100%;
  }

  .received .row > label,
  .received .row > .label {
    width: 89px;
  }

  .units .calc {
    flex: none;
    width: 119px;
  }

  .base .calc {
    width: 118px;
  }

  .large .calc input,
  .unit-select {
    font-size: 18px;
    line-height: 24px;
  }

  .medium .calc input {
    font-size: 16px;
  }

  .calc input::selection {
    background: #0078d7;
    color: #fff;
  }

  .unit {
    padding-left: 3px;
    white-space: nowrap;
  }

  .equals {
    width: 10px;
  }

  .unit-select {
    flex: none;
    width: 93px;
  }

  .vat {
    flex: none;
    width: 68px;
  }

  .radio-box {
    display: flex;
    align-items: center;
    width: 215px;
    height: 100%;
    padding-left: 21px;
    border: 1px solid var(--line);
    border-radius: 2px;
    color: #000;
  }

  .radio-box label {
    display: flex;
    align-items: center;
    gap: 4px;
    width: 95px;
  }

  .radio-box input {
    appearance: none;
    width: 15px;
    height: 15px;
    border: 1px solid #8d99ad;
    border-radius: 50%;
    background: linear-gradient(#f5f6f8, #d8dce3);
  }

  .radio-box input:checked {
    background: radial-gradient(circle, #8ea2c2 0 2px, #5d7294 3px, #e6e9ee 4px);
  }

  .editor-actions {
    flex: none;
    display: flex;
    align-items: center;
    justify-content: flex-end;
    gap: 33px;
    height: 41px;
    padding-right: 31px;
    background: #eef0f4;
  }

  .editor-actions .raised {
    width: 100px;
    height: 32px;
  }

  .marker-form {
    left: 7px;
    top: 231px;
    width: 355px;
    height: 225px;
  }
</style>
